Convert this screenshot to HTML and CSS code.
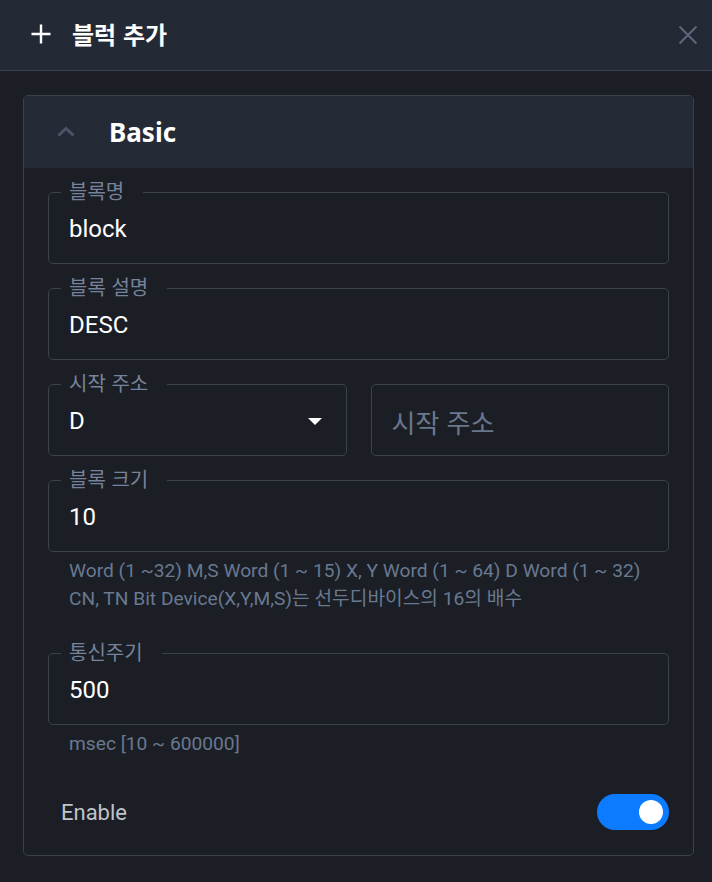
FILE: index.html
```html
<!DOCTYPE html>
<html lang="ko">
<head>
<meta charset="utf-8">
<title>블럭 추가</title>
<link rel="stylesheet" href="styles.css">
</head>
<body>
<div class="dialog">
  <header class="dlg-head">
    <svg class="plus" width="22" height="22" viewBox="0 0 22 22"><path d="M11 1.5v19M1.5 11h19" stroke="#fff" stroke-width="2.4" fill="none"/></svg>
    <h1 class="dlg-title">블럭 추가</h1>
    <svg class="close" width="20" height="20" viewBox="0 0 20 20"><path d="M1.5 1.5l17 17M18.5 1.5l-17 17" stroke="#5b6577" stroke-width="2.2" fill="none"/></svg>
  </header>

  <section class="card">
    <div class="card-head">
      <svg class="chev" width="24" height="24" viewBox="0 0 24 24"><path d="M4.5 15.5l7.5-7 7.5 7" stroke="#4b5467" stroke-width="3" fill="none"/></svg>
      <h2 class="card-title">Basic</h2>
    </div>
    <div class="card-body">
      <div class="field">
        <span class="label">블록명</span>
        <span class="value">block</span>
      </div>
      <div class="field">
        <span class="label">블록 설명</span>
        <span class="value">DESC</span>
      </div>
      <div class="pair">
        <div class="field select">
          <span class="label">시작 주소</span>
          <span class="value">D</span>
          <span class="caret"></span>
        </div>
        <div class="field">
          <span class="placeholder">시작 주소</span>
        </div>
      </div>
      <div class="group">
        <div class="field">
          <span class="label">블록 크기</span>
          <span class="value">10</span>
        </div>
        <p class="helper">Word (1 ~32) M,S Word (1 ~ 15) X, Y Word (1 ~ 64) D Word (1 ~ 32) CN, TN Bit Device(X,Y,M,S)는 선두디바이스의 16의 배수</p>
      </div>
      <div class="group comm">
        <div class="field">
          <span class="label">통신주기</span>
          <span class="value">500</span>
        </div>
        <p class="helper">msec [10 ~ 600000]</p>
      </div>
      <div class="enable-row">
        <span class="enable-text">Enable</span>
        <span class="toggle"><span class="knob"></span></span>
      </div>
    </div>
  </section>
</div>
</body>
</html>
```

FILE: styles.css
```css
* { box-sizing: border-box; }
html, body { margin: 0; padding: 0; }
body {
  background: #1b1e25;
  width: 712px;
  height: 882px;
  overflow: hidden;
  font-family: "Noto Sans", "Noto Sans CJK KR", sans-serif;
}
.dialog { display: flex; flex-direction: column; }

.dlg-head {
  height: 71px;
  background: #242a35;
  border-bottom: 1px solid #3a404c;
  display: flex;
  align-items: center;
  padding: 0 14px 3px 30px;
}
.plus { flex: none; margin-top: 1px; }
.dlg-title {
  margin: 0 0 0 20px;
  font-family: "Noto Sans CJK KR", sans-serif;
  font-weight: 700;
  font-size: 24px;
  color: #ffffff;
  flex: 1;
  line-height: 30px;
}
.close { flex: none; margin-top: 2px; }

.card {
  margin: 24px 18px 0 23px;
  width: 671px;
  border: 1px solid #3a404c;
  border-radius: 5px;
  overflow: hidden;
  background: #1b1e25;
}
.card-head {
  height: 72px;
  background: #252b36;
  display: flex;
  align-items: center;
  padding-left: 30px;
}
.chev { flex: none; }
.card-title {
  margin: 0 0 0 31px;
  font-family: "Noto Sans", sans-serif;
  font-weight: 700;
  font-size: 26px;
  color: #ffffff;
  line-height: 36px;
}
.card-body {
  padding: 24px 24px 25px 24px;
  display: flex;
  flex-direction: column;
  gap: 24px;
}

.field {
  position: relative;
  height: 72px;
  border: 1px solid #3b414d;
  border-radius: 5px;
  display: flex;
  align-items: center;
  padding: 0 20px;
}
.label {
  position: absolute;
  top: -14px;
  left: 12px;
  padding: 0 19px 0 8px;
  background: #1b1e25;
  font-family: "Noto Sans CJK KR", sans-serif;
  font-size: 20px;
  line-height: 24px;
  color: #76839a;
}
.value {
  font-family: Roboto, "Noto Sans CJK KR", sans-serif;
  font-size: 24px;
  color: #ffffff;
  line-height: 30px;
  margin-top: 2px;
  flex: 1;
}
.placeholder {
  font-family: "Noto Sans CJK KR", sans-serif;
  font-size: 26px;
  color: #6a788d;
  line-height: 30px;
  margin-top: 4px;
}
.pair {
  display: grid;
  grid-template-columns: 1fr 1fr;
  gap: 24px;
}
.caret {
  flex: none;
  width: 0;
  height: 0;
  border-left: 7px solid transparent;
  border-right: 7px solid transparent;
  border-top: 7px solid #ffffff;
  margin-right: 4px;
  margin-top: 2px;
}

.group { display: flex; flex-direction: column; }
.helper {
  margin: 5px 0 0 0;
  padding: 0 10px 0 21px;
  font-family: Roboto, "Noto Sans CJK KR", sans-serif;
  font-size: 19.2px;
  line-height: 28px;
  color: #687990;
}
.comm { margin-top: 16px; }

.enable-row {
  margin-top: 12px;
  display: flex;
  align-items: center;
  justify-content: space-between;
  padding-left: 13px;
}
.enable-text {
  font-family: Roboto, sans-serif;
  font-size: 22px;
  color: #bfc3ca;
}
.toggle {
  width: 72px;
  height: 36px;
  border-radius: 18px;
  background: #0d7bff;
  display: flex;
  align-items: center;
  justify-content: flex-end;
  padding-right: 6px;
}
.knob {
  width: 24px;
  height: 24px;
  border-radius: 50%;
  background: #ffffff;
}
```
